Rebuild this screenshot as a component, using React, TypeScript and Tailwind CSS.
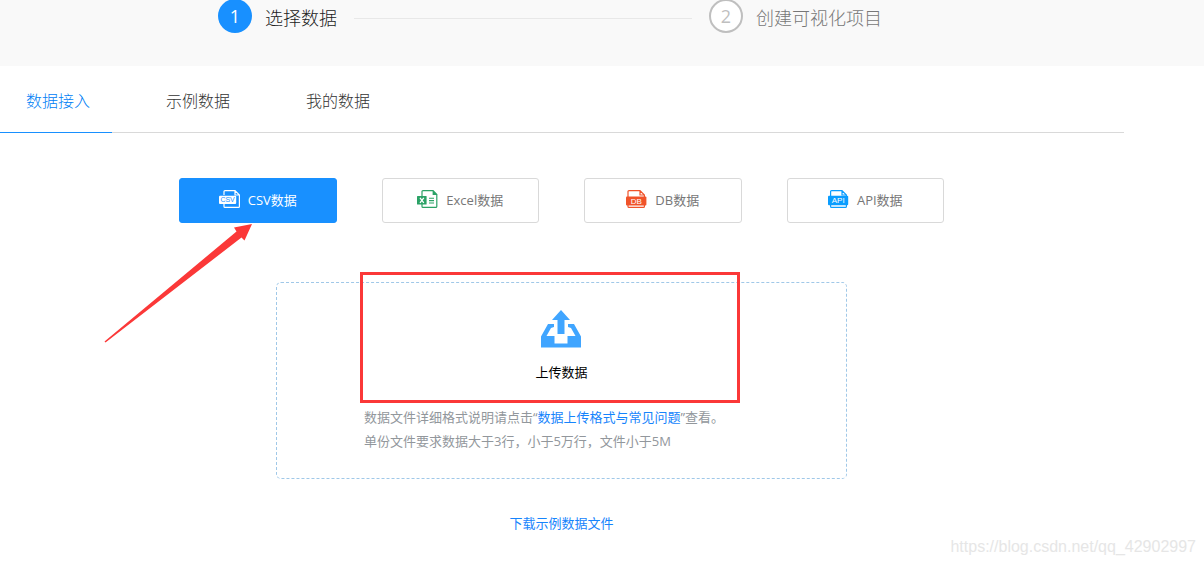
import React from 'react';

interface IconProps {
  className?: string;
}

const CsvIcon: React.FC<IconProps> = ({ className }) => (
  <svg className={className} viewBox="0 0 21 18" fill="none" aria-hidden="true">
    <path d="M5 5V1.6Q5 .6 6 .6H16L20.4 5V16.4Q20.4 17.4 19.4 17.4H6Q5 17.4 5 16.4V14M16 .8V5H20.2" stroke="#fff" strokeWidth="1.2" />
    <rect y="5.8" width="17.2" height="8.2" rx="1" fill="#fff" />
    <text x="8.6" y="12.4" textAnchor="middle" fontSize="7" fill="#1890ff" fontFamily="Liberation Sans, sans-serif">CSV</text>
  </svg>
);

const ExcelIcon: React.FC<IconProps> = ({ className }) => (
  <svg className={className} viewBox="0 0 21 18" fill="none" aria-hidden="true">
    <path d="M5 6V1.6Q5 .6 6 .6H16L19.8 4.6V16.4Q19.8 17.4 18.8 17.4H6Q5 17.4 5 16.4V14" stroke="#2ba266" strokeWidth="1.2" />
    <path d="M15.6 0L20.4 5H15.6Z" fill="#2ba266" />
    <rect y="6" width="9.6" height="8.6" rx="0.6" fill="#2ba266" />
    <path d="M3 7.8L6.8 12.8M6.8 7.8L3 12.8" stroke="#fff" strokeWidth="1.3" />
    <path d="M12 8.2H17M12 10.6H17M12 13H17" stroke="#2ba266" strokeWidth="1.1" />
  </svg>
);

const DbIcon: React.FC<IconProps> = ({ className }) => (
  <svg className={className} viewBox="0 0 21 18" fill="none" aria-hidden="true">
    <path d="M2 7V1.6Q2 .6 3 .6H14L18.4 5V7M14 .8V5H18.2M2 15V16.4Q2 17.4 3 17.4H17.4Q18.4 17.4 18.4 16.4V15" stroke="#f0532a" strokeWidth="1.2" />
    <rect y="6.6" width="20.4" height="8.8" rx="1" fill="#f0532a" />
    <text x="10.2" y="13.9" textAnchor="middle" fontSize="8" fill="#fff" fontFamily="Liberation Sans, sans-serif">DB</text>
  </svg>
);

const ApiIcon: React.FC<IconProps> = ({ className }) => (
  <svg className={className} viewBox="0 0 21 18" fill="none" aria-hidden="true">
    <path d="M2.6 6V1.6Q2.6 .6 3.6 .6H14L18.4 5V6M14 .8V5H18.2M2.6 15V16.4Q2.6 17.4 3.6 17.4H17.4Q18.4 17.4 18.4 16.4V15" stroke="#0a9dff" strokeWidth="1.2" />
    <rect y="5.8" width="20.2" height="9.4" rx="1" fill="#0a9dff" />
    <text x="10.2" y="13.4" textAnchor="middle" fontSize="8" fill="#fff" fontFamily="Liberation Sans, sans-serif">API</text>
  </svg>
);

const UploadIcon: React.FC<IconProps> = ({ className }) => (
  <svg className={className} viewBox="0 0 40 38" fill="#40a5ff" aria-hidden="true">
    <path d="M20 0L29 10H23.5V24H16.5V10H11Z" />
    <path d="M7 14H13V17L10 18L5.5 26H13.5V33.5H26.5V26H34.5L30 18L27 17V14H33L40 26.5V37.5H0V26.5Z" />
  </svg>
);

const tabs = ['数据接入', '示例数据', '我的数据'];

const sources = [
  { label: 'CSV数据', Icon: CsvIcon },
  { label: 'Excel数据', Icon: ExcelIcon },
  { label: 'DB数据', Icon: DbIcon },
  { label: 'API数据', Icon: ApiIcon },
];

const Steps: React.FC = () => (
  <header className="h-[66px] overflow-hidden bg-[#f9f9f9] pr-20">
    <ol className="mx-auto -mt-px flex max-w-[688px] items-center pr-6 text-lg">
      <li className="flex items-center gap-[13px] text-[#222]">
        <span className="flex h-[34px] w-[34px] items-center justify-center rounded-full bg-[#1890ff] text-white">1</span>
        <span className="pt-1 font-light">选择数据</span>
      </li>
      <li aria-hidden="true" className="mx-[17px] mt-1 h-px flex-1 bg-[#e8e8e8]" />
      <li className="flex items-center gap-[13px] text-[#777]">
        <span className="flex h-[34px] w-[34px] items-center justify-center rounded-full border-2 border-[#bfbfbf] bg-white text-[#bfbfbf]">2</span>
        <span className="pt-1 font-light">创建可视化项目</span>
      </li>
    </ol>
  </header>
);

const App: React.FC = () => {
  return (
    <div className="relative min-h-screen bg-white font-['Open_Sans','Noto_Sans_CJK_SC',sans-serif]">
      <Steps />

      <main className="pr-20">
        <nav className="flex gap-7 border-b border-[#d9d9d9]">
          {tabs.map((tab, i) => (
            <button
              key={tab}
              className={`-mb-px w-28 border-b pt-[23px] pb-[19px] pl-[26px] text-left text-base font-light ${i === 0 ? 'border-[#1890ff] text-[#0080f5]' : 'border-transparent text-[#333]'}`}
            >
              {tab}
            </button>
          ))}
        </nav>

        <div className="pr-px">
          <div className="mx-auto mt-[45px] grid max-w-[765px] grid-cols-4 gap-[45px]">
            {sources.map(({ label, Icon }, i) => (
              <div key={label} className="relative">
                <button
                  className={`flex h-[45px] w-full items-center justify-center gap-2 rounded-[3px] border text-[13px] ${i === 0 ? 'border-[#1890ff] bg-[#1890ff] text-white' : 'border-[#d9d9d9] bg-white text-[#777]'}`}
                >
                  <Icon className="mb-1 h-[18px] w-[21px]" />
                  {label}
                </button>
                {/* Seta apontando para o CSV */}
                {i === 0 && (
                  <svg className="pointer-events-none absolute top-full -left-[75px] h-[120px] w-[149px]" viewBox="0 0 149 120" fill="#fb3838" aria-hidden="true">
                    <path d="M148 1L130 4.5L132.5 8.5L.5 118.5L1.5 119.5L137.5 14.5L140.5 17.5Z" />
                  </svg>
                )}
              </div>
            ))}
          </div>

          <section className="relative mx-auto mt-[59px] max-w-[571px] rounded-[5px] border border-dashed border-[#a0c8e8] pt-[27px] pb-[25px]">
            <button className="mx-auto flex flex-col items-center text-[13px] leading-6 text-black">
              <UploadIcon className="mb-3 h-[38px] w-10" />
              上传数据
            </button>
            <div className="mx-auto mt-[21px] max-w-[395px] text-[13px] leading-6 text-[#92979c]">
              <p>
                数据文件详细格式说明请点击“<a href="#format" className="text-[#1684fc]">数据上传格式与常见问题</a>”查看。
              </p>
              <p>单份文件要求数据大于3行，小于5万行，文件小于5M</p>
            </div>
            <div className="pointer-events-none absolute -top-[11px] left-[83px] h-[131px] w-[380px] border-3 border-[#fb3838]" />
          </section>

          <div className="mt-8 text-center text-[13px] leading-6">
            <a href="#sample" className="text-[#1684fc]">下载示例数据文件</a>
          </div>
        </div>
      </main>

      <span className="absolute right-2 bottom-[6px] font-['Liberation_Sans',sans-serif] text-base text-[#e6e6e6]">
        https://blog.csdn.net/qq_42902997
      </span>
    </div>
  );
};

export default App;
